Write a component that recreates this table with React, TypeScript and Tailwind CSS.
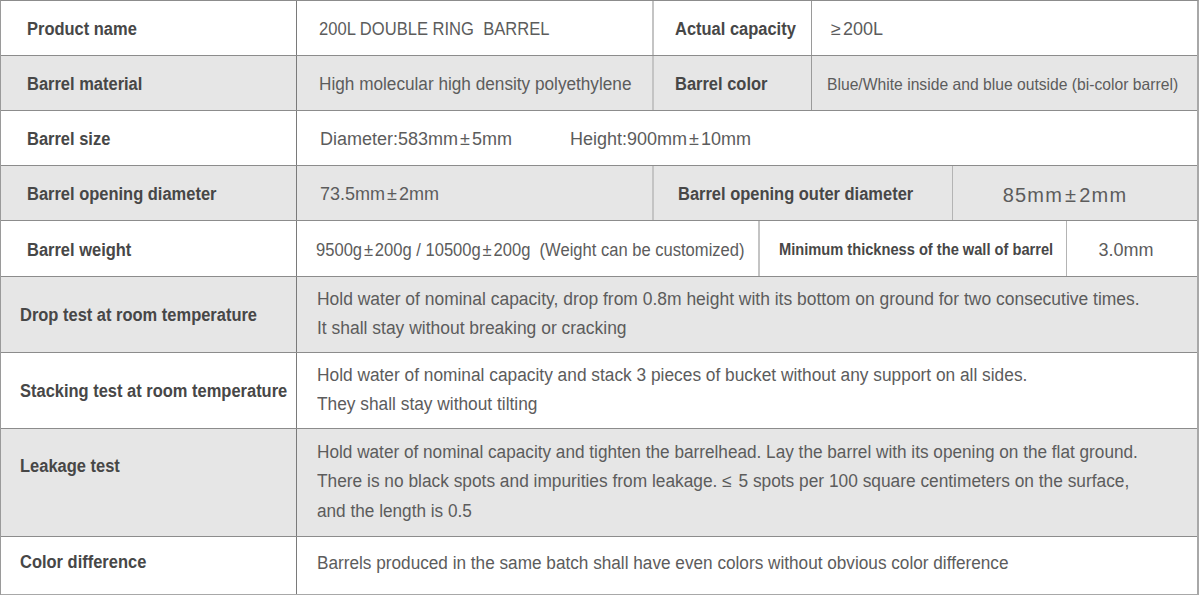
import React from "react";

const F = { fontFamily: '"Liberation Sans", Arial, sans-serif' };

function L({ children, small }: { children: React.ReactNode; small?: boolean }) {
  return (
    <span
      className={`inline-block whitespace-nowrap origin-left scale-x-[0.915] font-bold text-[#474747] ${small ? "text-[16px]" : "text-[18px]"}`}
    >
      {children}
    </span>
  );
}

function B({ children, small, cls }: { children: React.ReactNode; small?: boolean; cls?: string }) {
  return (
    <span
      className={`inline-block whitespace-nowrap text-[#5c5c5c] ${cls ?? "origin-left scale-x-[0.965]"} ${small ? "text-[16.5px]" : "text-[18px]"}`}
    >
      {children}
    </span>
  );
}

const PM = () => <span className="mx-[2px]">±</span>;

export default function App() {
  return (
    <div className="w-[1199px] h-[595px] bg-white overflow-hidden" style={F}>
      <div className="w-[1199px] border-t border-l border-r-2 border-b-2 border-t-[#8c8c8c] border-l-[#9a9a9a] border-r-[#a8a8a8] border-b-[#a8a8a8] flex flex-col">
        {/* Row 1 */}
        <div className="flex h-[55px] border-b border-[#8c8c8c] bg-white">
          <div className="w-[296px] shrink-0 flex items-center pl-[26px] pt-[3px] border-r border-[#7a7a7a]"><L>Product name</L></div>
          <div className="w-[357px] shrink-0 flex items-center pl-[22px] pt-[3px] border-r-2 border-[#c4c4c4]"><B cls="origin-left scale-x-[0.92]">200L DOUBLE RING&nbsp; BARREL</B></div>
          <div className="w-[158px] shrink-0 flex items-center pl-[21px] pt-[3px] border-r border-[#9a9a9a]"><L>Actual capacity</L></div>
          <div className="flex-1 flex items-center pl-[19px] pt-[3px]"><B cls="origin-left"><span className="mr-[2px]">≥</span>200L</B></div>
        </div>
        {/* Row 2 */}
        <div className="flex h-[55px] border-b border-[#8c8c8c] bg-[#e6e6e6]">
          <div className="w-[296px] shrink-0 flex items-center pl-[26px] pt-[3px] border-r border-[#7a7a7a]"><L>Barrel material</L></div>
          <div className="w-[357px] shrink-0 flex items-center pl-[22px] pt-[3px] border-r-2 border-[#c4c4c4]"><B cls="origin-left scale-x-[0.955]">High molecular high density polyethylene</B></div>
          <div className="w-[158px] shrink-0 flex items-center pl-[21px] pt-[3px] border-r border-[#9a9a9a]"><L>Barrel color</L></div>
          <div className="flex-1 flex items-center pl-[15px] pt-[3px]"><B small cls="origin-left scale-x-[0.95]">Blue/White inside and blue outside (bi-color barrel)</B></div>
        </div>
        {/* Row 3 */}
        <div className="flex h-[55px] border-b border-[#8c8c8c] bg-white">
          <div className="w-[296px] shrink-0 flex items-center pl-[26px] pt-[3px] border-r border-[#7a7a7a]"><L>Barrel size</L></div>
          <div className="flex-1 flex items-center pl-[23px] pt-[3px]">
            <span className="w-[250px] flex"><B cls="origin-left">Diameter:583mm<PM />5mm</B></span>
            <B cls="origin-left">Height:900mm<PM />10mm</B>
          </div>
        </div>
        {/* Row 4 */}
        <div className="flex h-[55px] border-b border-[#8c8c8c] bg-[#e6e6e6]">
          <div className="w-[296px] shrink-0 flex items-center pl-[26px] pt-[3px] border-r border-[#7a7a7a]"><L>Barrel opening diameter</L></div>
          <div className="w-[357px] shrink-0 flex items-center pl-[23px] pt-[3px] border-r-2 border-[#c4c4c4]"><B cls="origin-left">73.5mm<PM />2mm</B></div>
          <div className="w-[299px] shrink-0 flex items-center pl-[24px] pt-[3px] border-r border-[#b4b4b4]"><L>Barrel opening outer diameter</L></div>
          <div className="flex-1 flex items-center justify-center pr-[20px] pt-[3px]">
            <span className="text-[20px] tracking-[1.2px] text-[#5c5c5c] whitespace-nowrap">85mm<PM />2mm</span>
          </div>
        </div>
        {/* Row 5 */}
        <div className="flex h-[56px] border-b border-[#8c8c8c] bg-white">
          <div className="w-[296px] shrink-0 flex items-center pl-[26px] pt-[3px] border-r border-[#7a7a7a]"><L>Barrel weight</L></div>
          <div className="w-[463px] shrink-0 flex items-center pl-[19px] pt-[3px] border-r-2 border-[#c4c4c4]"><B cls="origin-left scale-x-[0.92]">9500g<PM />200g / 10500g<PM />200g&nbsp; (Weight can be customized)</B></div>
          <div className="w-[307px] shrink-0 flex items-center pl-[19px] pt-[3px] border-r border-[#b4b4b4]"><L small>Minimum thickness of the wall of barrel</L></div>
          <div className="flex-1 flex items-center justify-center pr-[12px] pt-[3px]"><B cls="origin-center">3.0mm</B></div>
        </div>
        {/* Row 6 */}
        <div className="flex h-[76px] border-b border-[#8c8c8c] bg-[#e6e6e6]">
          <div className="w-[296px] shrink-0 flex items-center pl-[19px] pt-[1px] border-r border-[#7a7a7a]"><L>Drop test at room temperature</L></div>
          <div className="flex-1 flex flex-col justify-center items-start pl-[20px] pb-[1px] leading-[29px]">
            <B cls="origin-left scale-x-[0.97]">Hold water of nominal capacity, drop from 0.8m height with its bottom on ground for two consecutive times.</B>
            <B cls="origin-left scale-x-[0.97]">It shall stay without breaking or cracking</B>
          </div>
        </div>
        {/* Row 7 */}
        <div className="flex h-[76px] border-b border-[#8c8c8c] bg-white">
          <div className="w-[296px] shrink-0 flex items-center pl-[19px] pt-[1px] border-r border-[#7a7a7a]"><L>Stacking test at room temperature</L></div>
          <div className="flex-1 flex flex-col justify-center items-start pl-[20px] pb-[1px] leading-[29px]">
            <B cls="origin-left scale-x-[0.962]">Hold water of nominal capacity and stack 3 pieces of bucket without any support on all sides.</B>
            <B cls="origin-left scale-x-[0.962]">They shall stay without tilting</B>
          </div>
        </div>
        {/* Row 8 */}
        <div className="flex h-[108px] border-b border-[#8c8c8c] bg-[#e6e6e6]">
          <div className="w-[296px] shrink-0 flex items-start pt-[24px] pl-[19px] border-r border-[#7a7a7a]"><L>Leakage test</L></div>
          <div className="flex-1 flex flex-col justify-center items-start pl-[20px] pb-[1px] leading-[29.5px]">
            <B cls="origin-left scale-x-[0.955]">Hold water of nominal capacity and tighten the barrelhead. Lay the barrel with its opening on the flat ground.</B>
            <B cls="origin-left scale-x-[0.962]">There is no black spots and impurities from leakage. <span className="mr-[2px]">≤</span> 5 spots per 100 square centimeters on the surface,</B>
            <B cls="origin-left scale-x-[0.955]">and the length is 0.5</B>
          </div>
        </div>
        {/* Row 9 */}
        <div className="flex h-[57px] bg-white">
          <div className="w-[296px] shrink-0 flex items-start pt-[12px] pl-[19px] border-r border-[#7a7a7a]"><L>Color difference</L></div>
          <div className="flex-1 flex items-start pt-[13px] pl-[20px]"><B cls="origin-left scale-x-[0.955]">Barrels produced in the same batch shall have even colors without obvious color difference</B></div>
        </div>
      </div>
    </div>
  );
}
